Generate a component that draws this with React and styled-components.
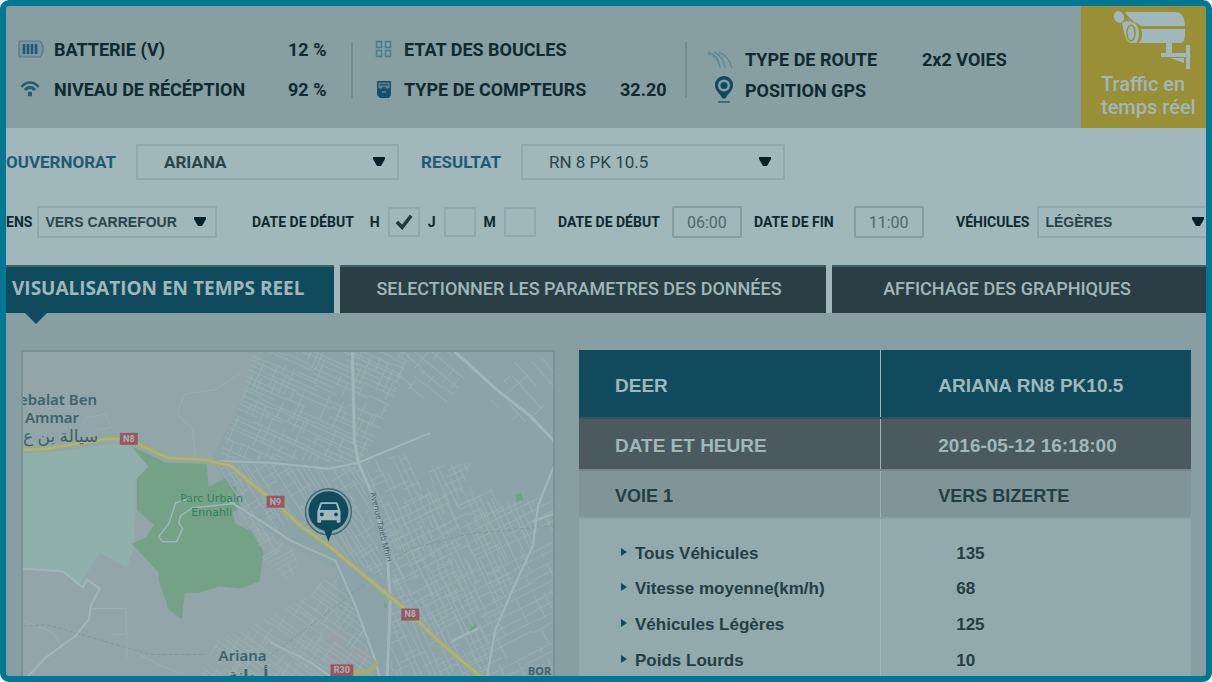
import React from "react";
import styled, {createGlobalStyle, css} from "styled-components";
import {MdDirectionsCar} from "react-icons/md";

const arrow = `url("data:image/svg+xml,%3Csvg xmlns='http://www.w3.org/2000/svg' viewBox='0 0 12 10'%3E%3Cpath d='M0 0h12v2L8 9H4L0 2z' fill='%2306222b'/%3E%3C/svg%3E")`;
const tick = `url("data:image/svg+xml,%3Csvg xmlns='http://www.w3.org/2000/svg' viewBox='0 0 20 18'%3E%3Cpath d='M2 9l6 6L18 2' fill='none' stroke='%23213a41' stroke-width='4'/%3E%3C/svg%3E")`;

const GlobalStyle = createGlobalStyle`
:root {
  --frame: #007893;
  --back: #879ea2;
  --light: #a0b7bb;
  --panel: #92a9ad;
  --line: #91a9ad;
  --petrol: #0f4a5d;
  --slate: #2a3f45;
  --text: #0f2a31;
}

* {
  box-sizing: border-box;
}

body {
  margin: 0;
  background: #fff;
  color: var(--text);
  font-family: Roboto, "Liberation Sans", sans-serif;
}
`;

const Frame = styled.div`
  display: flex;
  flex-direction: column;
  height: 100vh;
  border: 6px solid var(--frame);
  border-radius: 9px;
  overflow: hidden;
  background: var(--back);
`;

const Header = styled.header`
  display: grid;
  grid-template-columns: 345fr 334fr 396fr 125px;
  align-items: center;
  height: 122px;
  flex: none;
`;

const Stats = styled.dl`
  display: grid;
  grid-template-columns: ${p => p.$icon}px 1fr ${p => p.$value}px;
  grid-auto-rows: ${p => p.$row}px;
  align-items: center;
  margin: ${p => p.$top || 0}px 0 0;
  padding-left: ${p => p.$pad}px;
  font-size: 18px;
  font-weight: 700;
  white-space: nowrap;
  color: var(--petrol);

  dt, dd {
    margin: 0;
    color: var(--text);
  }

  svg {
    display: block;
  }
`;

const Divided = styled.div`
  display: flex;
  align-items: center;

  &::before {
    content: "";
    width: 2px;
    height: 56px;
    margin-top: 6px;
    background: #748c91;
  }

  > dl {
    flex: 1;
  }
`;

const CameraLink = styled.a`
  display: flex;
  flex-direction: column;
  align-self: stretch;
  gap: 3px;
  padding: 5px 0 0 20px;
  background: #988f37;
  color: var(--light);
  font-size: 20px;
  font-weight: 500;
  line-height: 23px;
  text-decoration: none;
  white-space: nowrap;

  svg {
    margin-left: 12px;
  }
`;

const Filters = styled.form`
  display: grid;
  gap: 26px;
  flex: none;
  padding: 16px 0 27px;
  background: var(--light);
`;

const PlaceRow = styled.div`
  display: grid;
  grid-template-columns: 393fr 386fr 421fr;
  align-items: center;
`;

const DetailRow = styled.div`
  display: grid;
  grid-template-columns: 246fr 306fr 196fr 202fr 250fr;
  align-items: center;
`;

const Field = styled.div`
  display: flex;
  align-items: center;
  gap: ${p => p.$gap}px;
  padding-left: ${p => p.$start || 0}px;
  padding-right: ${p => p.$end || 0}px;
`;

const Label = styled.label`
  flex: none;
  font-size: ${p => (p.$big ? 17 : 14)}px;
  font-weight: 700;
  color: ${p => (p.$big ? "#1f5b70" : "var(--text)")};
`;

const Select = styled.select`
  appearance: none;
  flex: 1;
  min-width: 0;
  height: 32px;
  padding: 0 6px;
  border: 2px solid var(--line);
  border-radius: 0;
  background: ${arrow} no-repeat right 9px center / 12px 10px;
  color: #2b444b;
  font: 700 14px "Liberation Sans", sans-serif;

  ${p => p.$big && css`
    height: 36px;
    padding: 0 26px;
    background-position: right 12px center;
    font: ${p.$light ? 400 : 700} 17px Roboto, sans-serif;
  `}

  ${p => p.$open && css`
    border-right: 0;
    background-position: right 2px center;
  `}
`;

const Check = styled.input`
  appearance: none;
  width: 32px;
  height: 30px;
  margin: 0;
  border: 2px solid var(--line);

  &:checked {
    background: ${tick} no-repeat center / 18px 16px;
  }
`;

const Time = styled.input`
  width: 70px;
  height: 32px;
  padding: 0;
  border: 2px solid #849da1;
  border-radius: 2px;
  background: none;
  color: #4d686e;
  font: 400 16px Roboto, sans-serif;
  text-align: center;
`;

const Tabs = styled.nav`
  display: grid;
  grid-template-columns: 328fr 486fr 374fr;
  gap: 6px;
  flex: none;
  background: var(--light);
`;

const Tab = styled.button`
  position: relative;
  height: 48px;
  padding: 0 ${p => p.$end || 0}px 4px 6px;
  border: 0;
  border-top: 2px solid #42626a;
  background: var(--slate);
  color: var(--light);
  font: 500 18px Roboto, sans-serif;
  white-space: nowrap;

  ${p => p.$active && css`
    background: var(--petrol);
    font: 700 19px "Open Sans", sans-serif;
    text-align: left;

    &::after {
      content: "";
      position: absolute;
      top: 100%;
      left: 19px;
      border: 11px solid transparent;
      border-top-color: var(--petrol);
    }
  `}
`;

const Main = styled.main`
  display: grid;
  grid-template-columns: 534fr 612fr;
  gap: 24px;
  flex: 1;
  min-height: 0;
  padding: 37px 15px 0;
`;

const MapBox = styled.section`
  min-height: 0;
  border: 2px solid #7a9297;
  border-bottom: 0;
  overflow: hidden;

  > svg {
    display: block;
    width: 100%;
    height: 100%;
  }
`;

const Panel = styled.section`
  min-height: 0;
  overflow: hidden;
  background: var(--panel);
`;

const Table = styled.table`
  width: 100%;
  border-collapse: collapse;
  table-layout: fixed;
  color: #243e45;
  font: 700 18px "Liberation Sans", sans-serif;
  text-align: left;

  th, td {
    padding: 0 0 0 36px;
    font-weight: 700;
  }

  th {
    width: 49.3%;
  }

  td {
    padding-left: 57px;
    border-left: 1px solid #9fb5b9;
  }
`;

const HeadRow = styled.tr`
  height: ${p => p.$height}px;
  background: ${p => p.$back};
  color: ${p => p.$color || "inherit"};
  border-bottom: 2px solid ${p => p.$edge};
  font-size: ${p => (p.$color ? 19 : 18)}px;

  th, td {
    padding-top: 4px;
  }
`;

const DataRow = styled.tr`
  height: 36px;
  font-size: 17px;

  th {
    padding-left: 42px;
  }

  td {
    padding-left: 75px;
  }

  &:first-child {
    height: 53px;
  }

  &:first-child > * {
    padding-top: 17px;
  }
`;

const Bullet = styled.span`
  display: inline-block;
  margin-right: 8px;
  border: solid transparent;
  border-width: 4px 0 4px 6px;
  border-left-color: var(--petrol);
  vertical-align: 3px;
`;

const BatteryIcon = () => (
  <svg width="26" height="18" viewBox="0 0 26 18">
    <path d="M2 1h20l2 3v2h1v6h-1v2l-2 3H2l-1-2V3z" fill="#66909b" fillOpacity=".5" stroke="#4c7c8a" strokeWidth="1.2"/>
    <path d="M6 4v10M10 4v10M14 4v10M18 4v10" stroke="#225a6d" strokeWidth="2.6"/>
  </svg>
);

const WifiIcon = () => (
  <svg width="24" height="16" viewBox="0 0 24 16" fill="none" stroke="#245d70" strokeWidth="2.6">
    <path d="M3.500 6C8 0 16 0 20.500 6"/>
    <path d="M7 9c3-3.500 7-3.500 10 0" strokeWidth="3.2"/>
    <path d="M10 13h4" strokeWidth="4.5"/>
  </svg>
);

const LoopsIcon = () => (
  <svg width="17" height="18" viewBox="0 0 17 18" fill="none" stroke="#4a7b89" strokeWidth="1.500">
    <path d="M1.500 1.500h5v6h-5zM10.500 1.500h5v6h-5zM1.500 10.500h5v6h-5zM10.500 10.500h5v6h-5z"/>
  </svg>
);

const CounterIcon = () => (
  <svg width="18" height="18" viewBox="0 0 18 18">
    <path d="M2 1h14v14l-2 3H5l-3-3z" fill="#14506a"/>
    <path d="M3.500 2.500h11v6h-11z" fill="#5b8794"/>
    <path d="M5 4h8v1.500H5zM7 7h4v2H7z" fill="#1c566a"/>
    <path d="M7 12h4" stroke="#5b8794" strokeWidth="1.500"/>
  </svg>
);

const RoadIcon = () => (
  <svg width="26" height="18" viewBox="0 0 26 18" fill="none" stroke="#5f8994" strokeWidth="1.400">
    <path d="M1 1c8 2 11 8 12 16M7 1c7 3 10 8 11 16M12 1c7 3 11 9 13 16"/>
    <path d="M1 3c5 1 8 4 10 8" strokeDasharray="3 2"/>
  </svg>
);

const PinIcon = () => (
  <svg width="32" height="30" viewBox="0 0 32 30">
    <path d="M17 0a9 9 0 0 1 9 9.500c0 5-5 8-7.500 13h-3C13 17.500 8 14.500 8 9.500A9 9 0 0 1 17 0z" fill="#0f4a5d"/>
    <circle cx="17" cy="9.500" r="6" fill="#879ea2"/>
    <circle cx="17" cy="9.500" r="3.600" fill="#0f4a5d"/>
    <path d="M11 26h12" stroke="#3d6f7d" strokeWidth="2"/>
  </svg>
);

const CameraIcon = () => (
  <svg width="80" height="59" viewBox="0 0 80 59" fill="#a0b7bb">
    <path d="M12 1h50c7 0 10 6 10 14H28c-4-3-7-4-11-5z"/>
    <path d="M28 18h44v6c0 5-2 8-5 8H26c3-4 4-9 2-14z"/>
    <ellipse cx="6" cy="6" rx="5" ry="6" transform="rotate(-25 6 6)"/>
    <path d="M9 12c4-3 12-2 16 3 3 5 3 12-1 17h-7c-5-3-6-11-8-20z"/>
    <ellipse cx="18" cy="22" rx="4" ry="8" fill="none" stroke="#988f37" strokeWidth="1.500"/>
    <path d="M24 14c4 5 3 13 0 19M11 2l9 9" fill="none" stroke="#988f37" strokeWidth="1.200"/>
    <path d="M53 32h6v10h14v-8h4v24h-4V46H48v-4h5zM57 47h14v5z"/>
  </svg>
);

const districts = [
  {id: "north", angle: 24, step: 5, points: "252,351 410,351 392,400 375,440 358,462 215,458 240,400"},
  {id: "west", angle: 58, step: 5, points: "215,462 360,466 372,520 386,580 335,550 290,520 262,545 236,510"},
  {id: "slope", angle: -30, step: 5, points: "250,522 292,548 300,568 288,580 262,560"},
  {id: "middle", angle: 65, step: 6, points: "364,462 405,453 425,495 430,465 470,462 462,490 500,500 534,500 532,545 505,610 487,676 390,676 392,560"},
  {id: "east", angle: -27, step: 9, points: "380,500 470,485 554,500 554,676 490,676 420,640 392,580"},
  {id: "corner", angle: 40, step: 10, points: "392,351 450,351 465,380 445,402 400,392"},
  {id: "ariana", angle: 35, step: 5, points: "215,640 240,630 300,600 335,568 360,620 375,676 200,676"},
  {id: "farm", angle: 48, step: 11, points: "490,400 515,360 554,355 554,400 520,425"},
];

// small seeded generator, so the streets keep their place between renders
const streets = (seed, step, angle) => {
  let n = seed * 7919 + 13;
  const rand = () => (n = (n * 16807) % 2147483647) / 2147483647;
  const lines = [];
  for (let v = -260; v < 260; v += step) {
    for (let u = -260; u < 260; ) {
      const len = 12 + Math.floor(rand() * 50);
      const at = v + Math.floor(rand() * 3);
      if (rand() > 0.22) lines.push(`M${u} ${at}h${len}`);
      if (rand() > 0.3) lines.push(`M${at} ${u}v${Math.floor(len / 2)}`);
      u += len;
    }
  }
  return <path d={lines.join("")} transform={`translate(380 515) rotate(${angle})`}/>;
};

const Road = ({d, width = 2, color = "#a0b6ba"}) => (
  <path d={d} fill="none" stroke={color} strokeWidth={width} strokeLinejoin="round"/>
);

const Badge = ({x, y, width = 18, children}) => (
  <g>
    <rect x={x} y={y} width={width} height="12" fill="#98585f"/>
    <text x={x + width / 2} y={y + 9} textAnchor="middle" fontSize="9" fontWeight="700" fill="#b4aeb3">{children}</text>
  </g>
);

const TrafficMap = () => (
  <svg viewBox="22 351 531 325" preserveAspectRatio="xMinYMin slice" role="img" aria-label="Carte du trafic">
    <defs>
      {districts.map(d => (
        <clipPath id={d.id} key={d.id}><polygon points={d.points}/></clipPath>
      ))}
    </defs>
    <rect x="0" y="300" width="1200" height="900" fill="#92a6aa"/>
    <path d="M262 351H1200V1000H380L335 568 290 545 232 505 213 455 240 400z" fill="#8ca4a9"/>
    <path d="M22 453l40-3 50-7 18 1 17 22-12 12v32l-2 37-7 20-27-15-21 33-18-15-38-2z" fill="#8fb0ab"/>
    <path d="M130 445l18 21-12 12v31l17 15-8 13-14 6 27 29v8l8 23 1 5 14 11 3-26 16-1 18-6 22 2 19-7 4-30-11-20-17-8-3-11 8-5-5-20-10-10-17 9-2-23-41-1z" fill="#75a287"/>
    <path d="M325 640l15-12 8 6-2 15 15-4 12 12-4 7-40-8z" fill="#97a1a8"/>
    <g fill="none" stroke="#98afb3" strokeWidth="1">
      {districts.map((d, i) => (
        <g clipPath={`url(#${d.id})`} key={d.id}>{streets(i + 1, d.step, d.angle)}</g>
      ))}
      <path d="M195 458l-3-30-16-15 8-20 30-4 25-16M80 425l5-8 20-4 5 14-15 2M90 608h36v50M22 620l30 12 12 20M110 634h15v-25M140 655l20 10 20 8"/>
    </g>
    <path d="M445 351l45 36M522 351l-25 30M356 361l20-10" stroke="#7fa8b7" fill="none"/>
    <path d="M22 626l23-2 105 30h55M270 655l60-45 80-62 60-15 84-8" stroke="#82979c" fill="none" strokeDasharray="4 2"/>
    <Road d="M22 568l40 3 20 16 4-8 13 9-9 17-2 14-13 16-30 22-20 21"/>
    <Road d="M206 460l64 2 58 6 30-6 72-30"/>
    <Road d="M352 351l2 89 4 22 14 32 15 62 3 44-3 76" width="3"/>
    <Road d="M455 351l43 39 32 25 24 25" width="3"/>
    <Road d="M554 465l-16 40-5 40-23 50-15 35-8 46M533 521l21-8M450 642l28-14"/>
    <Road d="M228 500l32 20 30 20 45 20 20 45 20 55 5 20M270 642l40 20 20 14"/>
    <Road d="M232 503l-40 4-12 8-2 7 4 6-6 13h-14l-4-5 10-13 7-21 17-5" width="1.500"/>
    <Road d="M22 449l24-1 30-5 29-5h23l17 9 22 10 38 2 25 6 20 17 25 20 25 23 28 20 82 68 30 29 45 38" width="5" color="#a5aa75"/>
    <Road d="M22 449l24-1 30-5 29-5h23l17 9 22 10 38 2 25 6 20 17 25 20 25 23 28 20 82 68 30 29 45 38" color="#a9b588"/>
    <Road d="M350 671c15 2 23 1 26-10" width="5" color="#a5aa75"/>
    <path d="M515 494l6-2 3 7-7 2zM470 627l6-4v4l-6 4zM384 600l3 6-3 2zM209 516l5-1 3 4-7 1z" fill="#70a286"/>
    <Badge x={119} y={432}>N8</Badge>
    <Badge x={266} y={495}>N9</Badge>
    <Badge x={401} y={608}>N8</Badge>
    <Badge x={330} y={664} width={23}>R30</Badge>
    <g fontFamily='"Noto Sans", "DejaVu Sans", sans-serif' fontWeight="600" fontSize="15" fill="#3f616c">
      <text x="18" y="404">ebalat Ben</text>
      <text x="24" y="422">Ammar</text>
      <text x="22" y="441" fontSize="17" fontWeight="400">سيالة بن ع</text>
      <text x="218" y="661">Ariana</text>
      <text x="228" y="680">أريانة</text>
      <text x="528" y="675" fontSize="11" fontWeight="700">BOR</text>
      <text x="370" y="492" fontSize="8" fontWeight="400" transform="rotate(77 370 492)">Avenue Taieb Mhiri</text>
      <g fontFamily='"DejaVu Sans", sans-serif' fontWeight="400" fontSize="11" fill="#2f805c" textAnchor="middle">
        <text x="211" y="501">Parc Urbain</text>
        <text x="211" y="515">Ennahli</text>
      </g>
    </g>
    <circle cx="328" cy="511" r="23" fill="#8ca4a9" stroke="#3d6c7a" strokeWidth="1.500"/>
    <path d="M328 541l-4-11a20 20 0 1 1 8 0z" fill="#0f4a5d"/>
    <MdDirectionsCar x="313" y="495" size={31} color="#a0b7bb"/>
  </svg>
);

const rows = [
  ["Tous Véhicules", 135],
  ["Vitesse moyenne(km/h)", 68],
  ["Véhicules Légères", 125],
  ["Poids Lourds", 10],
];

const App = () => {
  return <>
    <GlobalStyle/>
    <Frame>
      <Header>
        <Stats $icon={36} $value={63} $row={40} $pad={12} $top={4}>
          <BatteryIcon/><dt>BATTERIE (V)</dt><dd>12 %</dd>
          <WifiIcon/><dt>NIVEAU DE RÉCÉPTION</dt><dd>92 %</dd>
        </Stats>
        <Divided>
          <Stats $icon={29} $value={65} $row={40} $pad={22} $top={4}>
            <LoopsIcon/><dt>ETAT DES BOUCLES</dt><dd/>
            <CounterIcon/><dt>TYPE DE COMPTEURS</dt><dd>32.20</dd>
          </Stats>
        </Divided>
        <Divided>
          <Stats $icon={38} $value={159} $row={31} $pad={20} $top={16}>
            <RoadIcon/><dt>TYPE DE ROUTE</dt><dd>2x2 VOIES</dd>
            <PinIcon/><dt>POSITION GPS</dt><dd/>
          </Stats>
        </Divided>
        <CameraLink href="#trafic">
          <CameraIcon/>
          <span>Traffic en<br/>temps réel</span>
        </CameraLink>
      </Header>

      <Filters>
        <PlaceRow>
          <Field $gap={20}>
            <Label $big htmlFor="gouvernorat">OUVERNORAT</Label>
            <Select $big id="gouvernorat"><option>ARIANA</option></Select>
          </Field>
          <Field $gap={20} $start={22}>
            <Label $big htmlFor="resultat">RESULTAT</Label>
            <Select $big $light id="resultat"><option>RN 8 PK 10.5</option></Select>
          </Field>
        </PlaceRow>
        <DetailRow>
          <Field $gap={5} $end={35}>
            <Label htmlFor="sens">ENS</Label>
            <Select id="sens"><option>VERS CARREFOUR</option></Select>
          </Field>
          <Field $gap={16}>
            <Label as="span">DATE DE DÉBUT</Label>
            <Field $gap={8}>
              <Label htmlFor="heure">H</Label>
              <Check type="checkbox" id="heure" defaultChecked/>
              <Label htmlFor="jour">J</Label>
              <Check type="checkbox" id="jour"/>
              <Label htmlFor="mois">M</Label>
              <Check type="checkbox" id="mois"/>
            </Field>
          </Field>
          <Field $gap={12}>
            <Label htmlFor="debut">DATE DE DÉBUT</Label>
            <Time id="debut" defaultValue="06:00"/>
          </Field>
          <Field $gap={20}>
            <Label htmlFor="fin">DATE DE FIN</Label>
            <Time id="fin" defaultValue="11:00"/>
          </Field>
          <Field $gap={8}>
            <Label htmlFor="vehicules">VÉHICULES</Label>
            <Select $open id="vehicules"><option>LÉGÈRES</option></Select>
          </Field>
        </DetailRow>
      </Filters>

      <Tabs>
        <Tab $active>VISUALISATION EN TEMPS REEL</Tab>
        <Tab $end={14}>SELECTIONNER LES PARAMETRES DES DONNÉES</Tab>
        <Tab $end={30}>AFFICHAGE DES GRAPHIQUES</Tab>
      </Tabs>

      <Main>
        <MapBox><TrafficMap/></MapBox>
        <Panel>
          <Table>
            <thead>
              <HeadRow $height={68} $back="#0f4a5d" $color="#a0b7bb" $edge="#34525c">
                <th scope="row">DEER</th><td>ARIANA RN8 PK10.5</td>
              </HeadRow>
              <HeadRow $height={52} $back="#4a5a60" $color="#a0b7bb" $edge="#73888d">
                <th scope="row">DATE ET HEURE</th><td>2016-05-12 16:18:00</td>
              </HeadRow>
              <HeadRow $height={48} $back="#7f9599" $edge="#8aa0a4">
                <th scope="row">VOIE 1</th><td>VERS BIZERTE</td>
              </HeadRow>
            </thead>
            <tbody>
              {rows.map(([name, value]) => (
                <DataRow key={name}>
                  <th scope="row"><Bullet/>{name}</th>
                  <td>{value}</td>
                </DataRow>
              ))}
            </tbody>
          </Table>
        </Panel>
      </Main>
    </Frame>
  </>;
};

export default App;
